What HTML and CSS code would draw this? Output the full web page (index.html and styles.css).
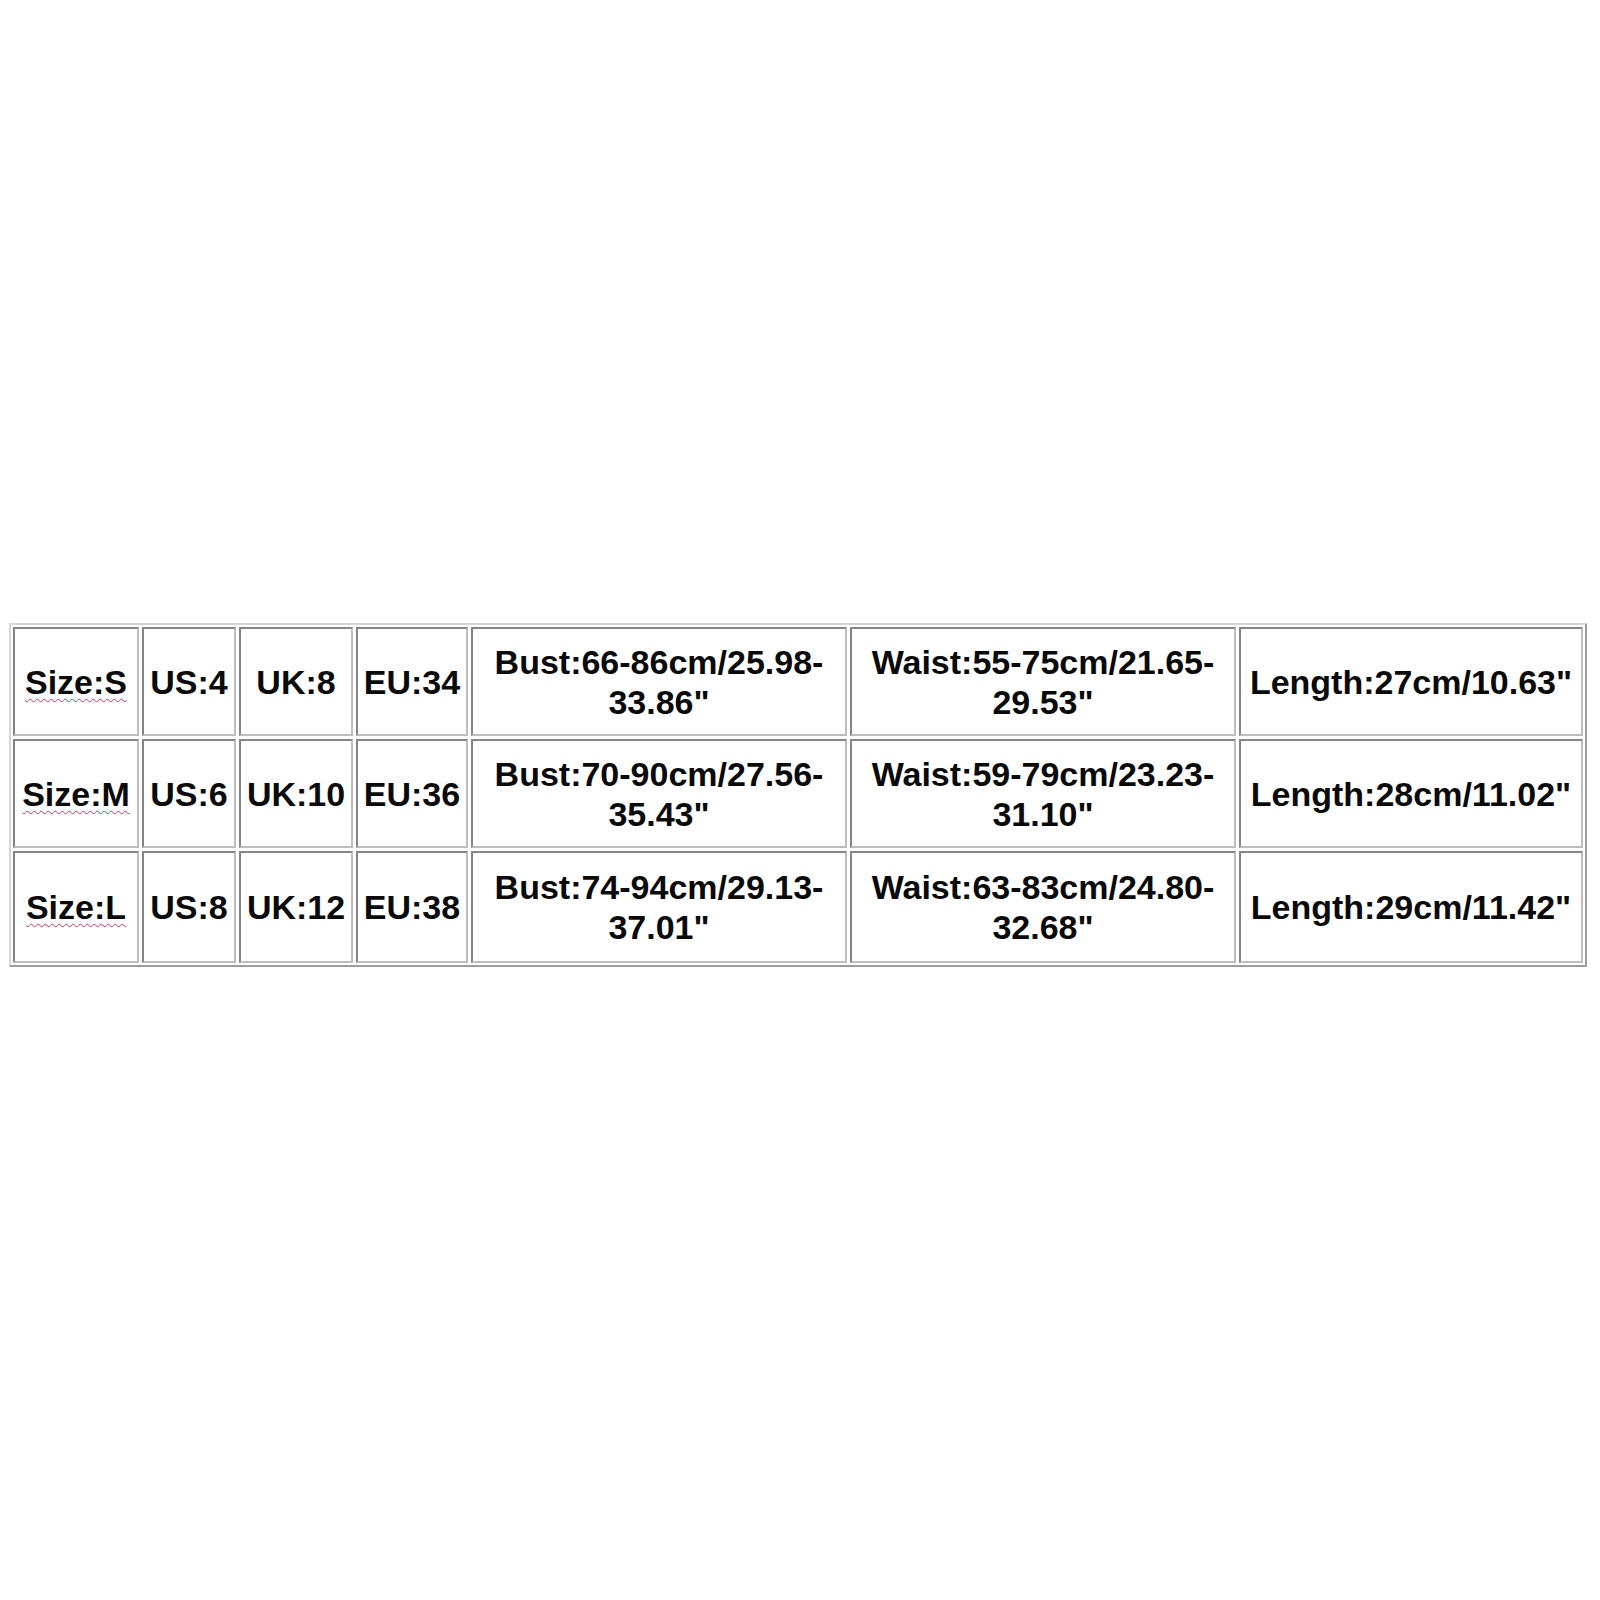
FILE: index.html
```html
<!DOCTYPE html>
<html lang="en">
<head>
<meta charset="utf-8">
<title>Size chart</title>
<link rel="stylesheet" href="styles.css">
</head>
<body>
<div class="chart">
  <div class="cell"><span class="spell">Size:S</span></div>
  <div class="cell">US:4</div>
  <div class="cell">UK:8</div>
  <div class="cell">EU:34</div>
  <div class="cell">Bust:66-86cm/25.98-33.86"</div>
  <div class="cell">Waist:55-75cm/21.65-29.53"</div>
  <div class="cell">Length:27cm/10.63"</div>

  <div class="cell"><span class="spell">Size:M</span></div>
  <div class="cell">US:6</div>
  <div class="cell">UK:10</div>
  <div class="cell">EU:36</div>
  <div class="cell">Bust:70-90cm/27.56-35.43"</div>
  <div class="cell">Waist:59-79cm/23.23-31.10"</div>
  <div class="cell">Length:28cm/11.02"</div>

  <div class="cell"><span class="spell">Size:L</span></div>
  <div class="cell">US:8</div>
  <div class="cell">UK:12</div>
  <div class="cell">EU:38</div>
  <div class="cell">Bust:74-94cm/29.13-37.01"</div>
  <div class="cell">Waist:63-83cm/24.80-32.68"</div>
  <div class="cell">Length:29cm/11.42"</div>
</div>
</body>
</html>
```
FILE: styles.css
```css
html, body {
  margin: 0;
  padding: 0;
  background: #ffffff;
}

body {
  padding: 623px 0 0 9px;
  font-family: "Liberation Sans", Arial, sans-serif;
}

.chart {
  display: grid;
  grid-template-columns: 126px 94px 114px 112px 376px 386px 344px;
  grid-template-rows: 109px 109px 112px;
  gap: 3px;
  padding: 2px;
  width: max-content;
  border: 2px solid;
  border-color: #d6d6d6 #9c9c9c #9c9c9c #d6d6d6;
}

.cell {
  display: flex;
  align-items: center;
  justify-content: center;
  text-align: center;
  box-sizing: border-box;
  border: 2px solid;
  border-color: #858585 #bdbdbd #bdbdbd #858585;
  padding: 0 1px;
  font-size: 34px;
  font-weight: bold;
  line-height: 40px;
  color: #0a0a0a;
}

.spell {
  text-decoration: underline wavy #c23a5e;
  text-decoration-thickness: 1px;
  text-underline-offset: 4px;
}
```
